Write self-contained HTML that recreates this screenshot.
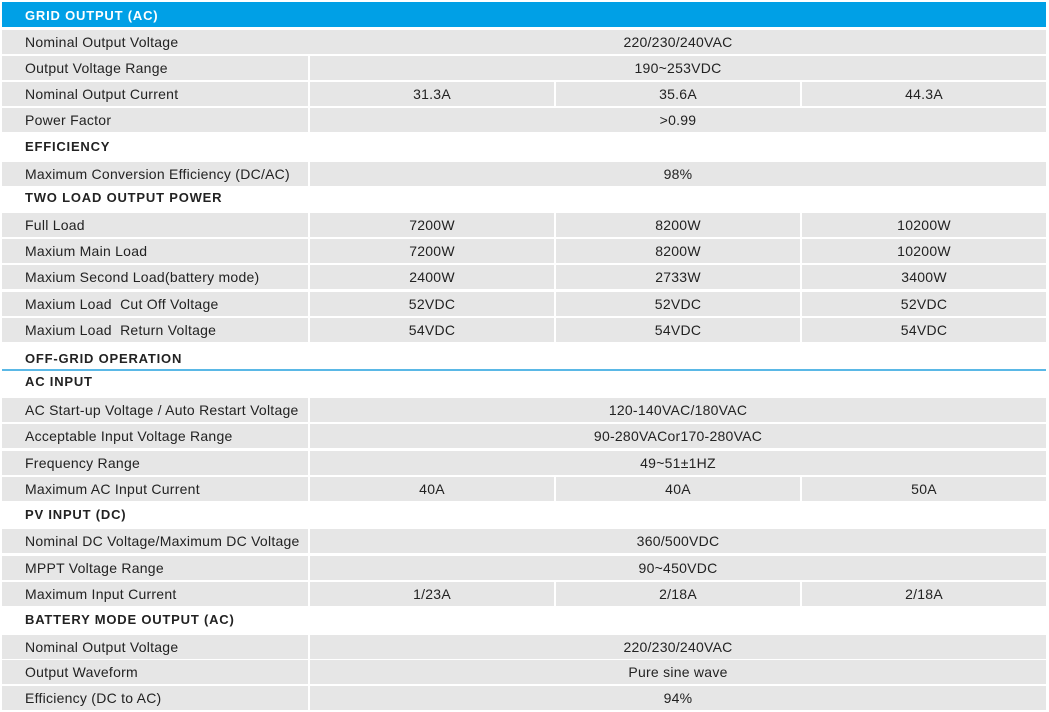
<!DOCTYPE html>
<html><head><meta charset="utf-8"><style>
body{margin:0;width:1049px;height:712px;background:#fff;position:relative;overflow:hidden;font-family:"Liberation Sans",Arial,sans-serif;font-size:14px;color:#222;letter-spacing:0.25px}
.r{position:absolute;left:2px;width:1044px;height:24px}
.r div{position:absolute;top:0;height:24px;line-height:25px;background:#e6e6e6;text-align:center}
.r .l{left:0;width:306px;text-align:left;padding-left:23px;box-sizing:border-box;white-space:nowrap}
.r .m{left:308px;width:736px}
.r .a{left:308px;width:244px}.r .b{left:554px;width:244px}.r .c{left:800px;width:244px}
.h{position:absolute;left:25px;font-weight:bold;font-size:13px;letter-spacing:0.8px;line-height:20px}
.blue{position:absolute;left:2px;top:2px;width:1044px;height:25px;background:#00a0e6;color:#fff;font-weight:bold;font-size:13px;line-height:27px;padding-left:23px;box-sizing:border-box;letter-spacing:0.8px}
.line{position:absolute;left:2px;width:1044px;top:369px;height:2px;background:#5ab8e6}
</style></head><body>
<div class="blue">GRID OUTPUT (AC)</div>
<div class="r" style="top:30px"><div class="l" style="width:308px">Nominal Output Voltage</div><div class="m">220/230/240VAC</div></div>
<div class="r" style="top:56px"><div class="l">Output Voltage Range</div><div class="m">190~253VDC</div></div>
<div class="r" style="top:82px"><div class="l">Nominal Output Current</div><div class="a">31.3A</div><div class="b">35.6A</div><div class="c">44.3A</div></div>
<div class="r" style="top:108px"><div class="l">Power Factor</div><div class="m">&gt;0.99</div></div>
<div class="h" style="top:137px">EFFICIENCY</div>
<div class="r" style="top:162px"><div class="l">Maximum Conversion Efficiency (DC/AC)</div><div class="m">98%</div></div>
<div class="h" style="top:188px">TWO LOAD OUTPUT POWER</div>
<div class="r" style="top:213px"><div class="l">Full Load</div><div class="a">7200W</div><div class="b">8200W</div><div class="c">10200W</div></div>
<div class="r" style="top:239px"><div class="l">Maxium Main Load</div><div class="a">7200W</div><div class="b">8200W</div><div class="c">10200W</div></div>
<div class="r" style="top:265px"><div class="l">Maxium Second Load(battery mode)</div><div class="a">2400W</div><div class="b">2733W</div><div class="c">3400W</div></div>
<div class="r" style="top:292px"><div class="l">Maxium Load&nbsp; Cut Off Voltage</div><div class="a">52VDC</div><div class="b">52VDC</div><div class="c">52VDC</div></div>
<div class="r" style="top:318px"><div class="l">Maxium Load&nbsp; Return Voltage</div><div class="a">54VDC</div><div class="b">54VDC</div><div class="c">54VDC</div></div>
<div class="h" style="top:349px">OFF-GRID OPERATION</div>
<div class="line"></div>
<div class="h" style="top:372px">AC INPUT</div>
<div class="r" style="top:398px"><div class="l">AC Start-up Voltage / Auto Restart Voltage</div><div class="m">120-140VAC/180VAC</div></div>
<div class="r" style="top:424px"><div class="l">Acceptable Input Voltage Range</div><div class="m">90-280VACor170-280VAC</div></div>
<div class="r" style="top:451px"><div class="l">Frequency Range</div><div class="m">49~51±1HZ</div></div>
<div class="r" style="top:477px"><div class="l">Maximum AC Input Current</div><div class="a">40A</div><div class="b">40A</div><div class="c">50A</div></div>
<div class="h" style="top:505px">PV INPUT (DC)</div>
<div class="r" style="top:529px"><div class="l">Nominal DC Voltage/Maximum DC Voltage</div><div class="m">360/500VDC</div></div>
<div class="r" style="top:556px"><div class="l">MPPT Voltage Range</div><div class="m">90~450VDC</div></div>
<div class="r" style="top:582px"><div class="l">Maximum Input Current</div><div class="a">1/23A</div><div class="b">2/18A</div><div class="c">2/18A</div></div>
<div class="h" style="top:610px">BATTERY MODE OUTPUT (AC)</div>
<div class="r" style="top:635px"><div class="l">Nominal Output Voltage</div><div class="m">220/230/240VAC</div></div>
<div class="r" style="top:660px"><div class="l">Output Waveform</div><div class="m">Pure sine wave</div></div>
<div class="r" style="top:686px"><div class="l">Efficiency (DC to AC)</div><div class="m">94%</div></div>
</body></html>
